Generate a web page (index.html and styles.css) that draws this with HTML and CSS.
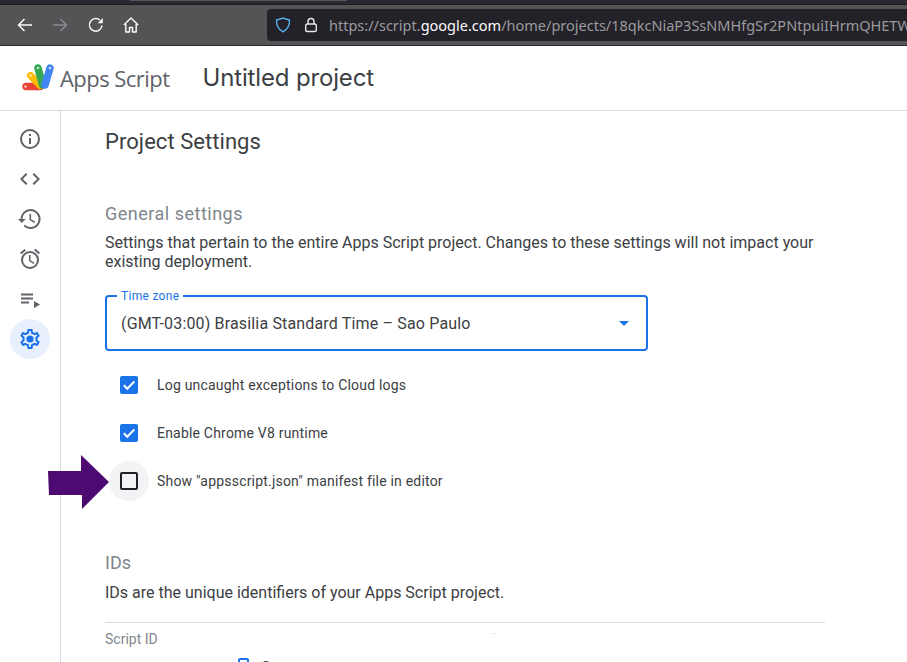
FILE: index.html
```html
<!DOCTYPE html>
<html lang="en">
<head>
<meta charset="utf-8">
<title>Apps Script - Project Settings</title>
<link rel="stylesheet" href="styles.css">
</head>
<body>
<div class="chrome">
  <div class="tabstrip"><div class="tabedge"></div></div>
  <div class="toolbar">
    <svg class="nav nav-back" viewBox="0 0 18 18" width="18" height="18"><path d="M16 9H2.500M8.500 3 2.500 9l6 6" fill="none" stroke="#fbfbfe" stroke-width="1.500"/></svg>
    <svg class="nav nav-fwd" viewBox="0 0 18 18" width="18" height="18"><path d="M2 9h13.500M9.500 3l6 6-6 6" fill="none" stroke="#8b8a8e" stroke-width="1.500"/></svg>
    <svg class="nav nav-reload" viewBox="0 0 18 18" width="18" height="18"><path d="M15 9.500A6.300 6.300 0 1 1 12.800 4" fill="none" stroke="#fbfbfe" stroke-width="1.500"/><path d="M15.800 2v5.200h-5.200z" fill="#fbfbfe"/></svg>
    <svg class="nav nav-home" viewBox="0 0 18 18" width="18" height="18"><path d="M1.800 9 9 2l7.200 7M3.800 8v8h3.700v-4.500h3V16h3.700V8" fill="none" stroke="#fbfbfe" stroke-width="1.400" stroke-linejoin="round"/></svg>
    <div class="urlbar">
      <svg class="shield" viewBox="0 0 16 16" width="16" height="16"><path d="M8 1.200 14.500 3c.2 5.500-2 9.500-6.500 11.800C3.500 12.500 1.300 8.500 1.500 3z" fill="none" stroke="#57b4f0" stroke-width="1.400" stroke-linejoin="round"/></svg>
      <svg class="lock" viewBox="0 0 14 16" width="14" height="16"><path d="M4 7V4.500a3 3 0 0 1 6 0V7" fill="none" stroke="#e6e6ea" stroke-width="1.400"/><rect x="1.700" y="7" width="10.600" height="7.500" rx="1.800" fill="none" stroke="#e6e6ea" stroke-width="1.400"/></svg>
      <div class="url">https://script.<b>google.com</b>/home/projects/18qkcNiaP3SsNMHfgSr2PNtpuiIHrmQHETW</div>
    </div>
  </div>
</div>

<header class="appbar">
  <svg class="logo" viewBox="0 0 34 28" width="34" height="28" fill="none" stroke-linecap="round">
    <path d="M5 22.500H19" stroke="#ea4335" stroke-width="7.500"/>
    <path d="M9.500 11.500 19 21.500" stroke="#fbbc04" stroke-width="7"/>
    <path d="M17 4 21.500 21" stroke="#34a853" stroke-width="7.500"/>
    <path d="M29 4 24 21" stroke="#4285f4" stroke-width="7.500"/>
    <g fill="#fff" opacity=".75"><circle cx="29" cy="4" r="1.300"/><circle cx="17" cy="4" r="1.300"/><circle cx="9.500" cy="11.500" r="1.200"/><circle cx="4.500" cy="22.500" r="1.200"/></g>
  </svg>
  <div class="brand">Apps Script</div>
  <div class="project">Untitled project</div>
</header>

<div class="body">
  <nav class="rail">
    <div class="rail-item"><svg viewBox="0 0 24 24" width="24" height="24"><path fill="#5f6368" d="M11 7h2v2h-2zm0 4h2v6h-2zm1-9a10 10 0 1 0 0 20 10 10 0 0 0 0-20zm0 18a8 8 0 1 1 0-16 8 8 0 0 1 0 16z"/></svg></div>
    <div class="rail-item"><svg viewBox="0 0 24 24" width="24" height="24"><path fill="#5f6368" d="M9.400 16.600 4.800 12l4.600-4.600L8 6l-6 6 6 6zm5.200 0 4.600-4.600-4.600-4.600L16 6l6 6-6 6z"/></svg></div>
    <div class="rail-item"><svg viewBox="0 0 24 24" width="24" height="24"><path fill="#5f6368" d="M12.500 2a10 10 0 0 0-10 10H0l3.800 4L7.700 12H4.500a8 8 0 1 1 2.400 5.700l-1.400 1.400A10 10 0 1 0 12.500 2zm-1 5v6l4.800 2.900.8-1.300-4-2.400V7z"/></svg></div>
    <div class="rail-item"><svg viewBox="0 0 24 24" width="24" height="24"><path fill="#5f6368" d="m22 5.700-4.600-3.900-1.300 1.500 4.600 3.900zM7.900 3.400 6.600 1.900 2 5.700l1.300 1.500zM12.500 8H11v6l4.700 2.900.8-1.200-4-2.400zM12 4a9 9 0 1 0 0 18 9 9 0 0 0 0-18zm0 16a7 7 0 1 1 0-14 7 7 0 0 1 0 14z"/></svg></div>
    <div class="rail-item"><svg viewBox="0 0 24 24" width="24" height="24"><path fill="#5f6368" d="M3 6.500h12v2H3zm0 4h12v2H3zm0 4h8v2H3zm13-.5 6 3.500-6 3.500z"/></svg></div>
    <div class="rail-item rail-active"><svg viewBox="0 0 24 24" width="24" height="24"><path fill="#1a73e8" d="M19.430 12.980c.04-.32.07-.64.07-.98 0-.34-.03-.66-.07-.98l2.110-1.650c.19-.15.24-.42.12-.64l-2-3.460c-.09-.16-.26-.25-.44-.25-.06 0-.12.01-.17.03l-2.490 1c-.52-.4-1.080-.73-1.690-.98l-.38-2.650C14.460 2.180 14.250 2 14 2h-4c-.25 0-.46.18-.49.42l-.38 2.650c-.61.25-1.170.59-1.690.98l-2.490-1c-.06-.02-.12-.03-.18-.03-.17 0-.34.09-.43.25l-2 3.460c-.13.22-.07.49.12.64l2.110 1.650c-.04.32-.07.65-.07.98 0 .33.03.66.07.98l-2.110 1.650c-.19.15-.24.42-.12.64l2 3.460c.09.16.26.25.44.25.06 0 .12-.01.17-.03l2.490-1c.52.4 1.080.73 1.690.98l.38 2.650c.03.24.24.42.49.42h4c.25 0 .46-.18.49-.42l.38-2.650c.61-.25 1.170-.59 1.690-.98l2.490 1c.06.02.12.03.18.03.17 0 .34-.09.43-.25l2-3.460c.12-.22.07-.49-.12-.64l-2.110-1.650zm-1.980-1.710c.04.31.05.52.05.73 0 .21-.02.43-.05.73l-.14 1.130.89.7 1.080.84-.7 1.210-1.270-.51-1.040-.42-.9.68c-.43.32-.84.56-1.250.73l-1.060.43-.16 1.130-.2 1.350h-1.400l-.19-1.350-.16-1.130-1.060-.43c-.43-.18-.83-.41-1.230-.71l-.91-.7-1.060.43-1.270.51-.7-1.210 1.080-.84.89-.7-.14-1.130c-.03-.31-.05-.54-.05-.74s.02-.43.05-.73l.14-1.130-.89-.7-1.080-.84.7-1.210 1.270.51 1.040.42.9-.68c.43-.32.84-.56 1.250-.73l1.060-.43.16-1.130.2-1.350h1.390l.19 1.350.16 1.130 1.060.43c.43.18.83.41 1.230.71l.91.7 1.060-.43 1.270-.51.7 1.210-1.070.85-.89.7.14 1.130z"/><circle cx="12" cy="12" r="3.600" fill="#1a73e8"/></svg></div>
  </nav>

  <main class="main">
    <h1 class="page-title">Project Settings</h1>

    <h2 class="section-title">General settings</h2>
    <p class="section-text">Settings that pertain to the entire Apps Script project. Changes to these settings will not impact your existing deployment.</p>

    <div class="select">
      <span class="select-label">Time zone</span>
      <span class="select-value">(GMT-03:00) Brasilia Standard Time – Sao Paulo</span>
      <span class="select-caret"></span>
    </div>

    <div class="checks">
      <div class="check-row">
        <span class="box box-on"><svg viewBox="0 0 18 18" width="18" height="18"><path d="m3.800 9.300 3.500 3.500 7-7.300" fill="none" stroke="#fff" stroke-width="2"/></svg></span>
        <span class="check-label">Log uncaught exceptions to Cloud logs</span>
      </div>
      <div class="check-row">
        <span class="box box-on"><svg viewBox="0 0 18 18" width="18" height="18"><path d="m3.800 9.300 3.500 3.500 7-7.300" fill="none" stroke="#fff" stroke-width="2"/></svg></span>
        <span class="check-label">Enable Chrome V8 runtime</span>
      </div>
      <div class="check-row">
        <span class="box box-off"></span>
        <span class="check-label">Show "appsscript.json" manifest file in editor</span>
        <svg class="arrow" viewBox="0 0 62 56" width="62" height="56"><path d="M0 16h33V0l28 27-27 27V40H1z" fill="#4d0a70"/></svg>
      </div>
    </div>

    <h2 class="section-title ids-title">IDs</h2>
    <p class="section-text ids-text">IDs are the unique identifiers of your Apps Script project.</p>

    <div class="id-block">
      <div class="id-label">Script ID</div>
      <span class="speck"></span><span class="clip-a"></span><span class="clip-b"></span>
    </div>
  </main>
</div>
</body>
</html>
```
FILE: styles.css
```css
* { box-sizing: border-box; }
html, body { margin: 0; padding: 0; }
body { width: 907px; height: 662px; overflow: hidden; background: #fff; font-family: Roboto, "Liberation Sans", sans-serif; color: #3c4043; }

.chrome { height: 46px; background: #545356; border-bottom: 1px solid #2b2a30; overflow: hidden; }
.tabstrip { height: 5px; background: #2a2830; border-bottom: 1px solid #1d1c21; padding-left: 130px; }
.tabedge { width: 217px; height: 1px; background: #55545a; }
.toolbar { display: flex; align-items: center; height: 40px; padding: 0 0 1px 16px; }
.nav { flex: none; }
.nav-fwd { margin-left: 17px; }
.nav-reload { margin-left: 18px; }
.nav-home { margin-left: 17px; }
.urlbar { display: flex; align-items: center; flex: none; width: 660px; height: 32px; margin-left: 127px; background: #232228; border-radius: 4px 0 0 4px; padding-left: 8px; overflow: hidden; }
.shield { flex: none; }
.lock { margin-left: 13px; flex: none; }
.url { flex: none; margin-left: 11px; font: 14.500px "Noto Sans", "Open Sans", sans-serif; color: #9b9a9e; white-space: nowrap; }
.url b { font-weight: 400; color: #fbfbfe; }

.appbar { display: flex; align-items: center; height: 65px; border-bottom: 1px solid #dadce0; padding-left: 21px; }
.logo { flex: none; }
.brand { margin-left: 5px; font: 22px "Open Sans", Roboto, sans-serif; letter-spacing: -.55px; color: #5f6368; }
.project { margin-left: 33px; margin-bottom: 2px; font: 24px Inter, Roboto, sans-serif; letter-spacing: -.15px; color: #3c4043; }

.body { display: flex; height: 551px; }
.rail { flex: none; width: 61px; border-right: 1px solid #dadce0; padding: 8px 0 0 10px; display: flex; flex-direction: column; }
.rail-item { width: 40px; height: 40px; display: flex; align-items: center; justify-content: center; border-radius: 50%; }
.rail-active { background: #e8f0fe; }

.main { flex: 1; padding: 0 0 0 44px; position: relative; z-index: 1; }
.page-title { margin: 17px 0 0; font: 400 22px/28px Roboto, sans-serif; letter-spacing: .05px; color: #3c4043; }
.section-title { margin: 46px 0 0; font: 400 18px/24px Roboto, sans-serif; letter-spacing: .5px; color: #80868b; }
.section-text { margin: 7px 0 0; width: 720px; font: 400 16px/19px Roboto, sans-serif; color: #3c4043; }

.select { position: relative; display: flex; align-items: center; width: 543px; height: 56px; margin-top: 24px; padding: 1px 14px 0; border: 2px solid #1a73e8; border-radius: 4px; }
.select-label { position: absolute; left: 10px; top: -8px; padding: 0 4px; background: #fff; font: 400 12px/14px Roboto, sans-serif; letter-spacing: .3px; color: #1a73e8; }
.select-value { font: 400 16px/20px Roboto, sans-serif; letter-spacing: .16px; color: #3c4043; }
.select-caret { margin-left: auto; margin-right: 3px; border-left: 5px solid transparent; border-right: 5px solid transparent; border-top: 5px solid #1a73e8; }

.checks { display: flex; flex-direction: column; margin-top: 10px; }
.check-row { position: relative; display: flex; align-items: center; height: 48px; padding-left: 15px; }
.box { flex: none; width: 18px; height: 18px; border-radius: 2px; }
.box-on { background: #1a73e8; }
.box-off { position: relative; border: 2px solid #202124; }
.box-off::before { content: ""; position: absolute; z-index: -1; left: -13px; top: -13px; width: 40px; height: 40px; border-radius: 50%; background: #f1f3f4; }
.check-label { margin-left: 19px; font: 400 14px/20px Roboto, sans-serif; letter-spacing: .2px; color: #3c4043; }
.arrow { position: absolute; left: -57px; top: -2px; }

.ids-title { margin-top: 46px; letter-spacing: 0; }
.ids-text { margin-top: 8px; }
.id-block { position: relative; width: 720px; margin-top: 20px; border-top: 1px solid #dadce0; padding-top: 7px; height: 60px; }
.id-label { font: 400 14px/18px Roboto, sans-serif; color: #80868b; }
.speck { position: absolute; left: 387px; top: 10px; width: 5px; height: 1px; background: #e4e5e7; }
.clip-a { position: absolute; left: 133px; top: 35px; width: 11px; height: 12px; border: 2px solid #1a73e8; border-radius: 2px; }
.clip-b { position: absolute; left: 156px; top: 38px; width: 10px; height: 10px; border-radius: 50%; background: #3c4043; }
```
